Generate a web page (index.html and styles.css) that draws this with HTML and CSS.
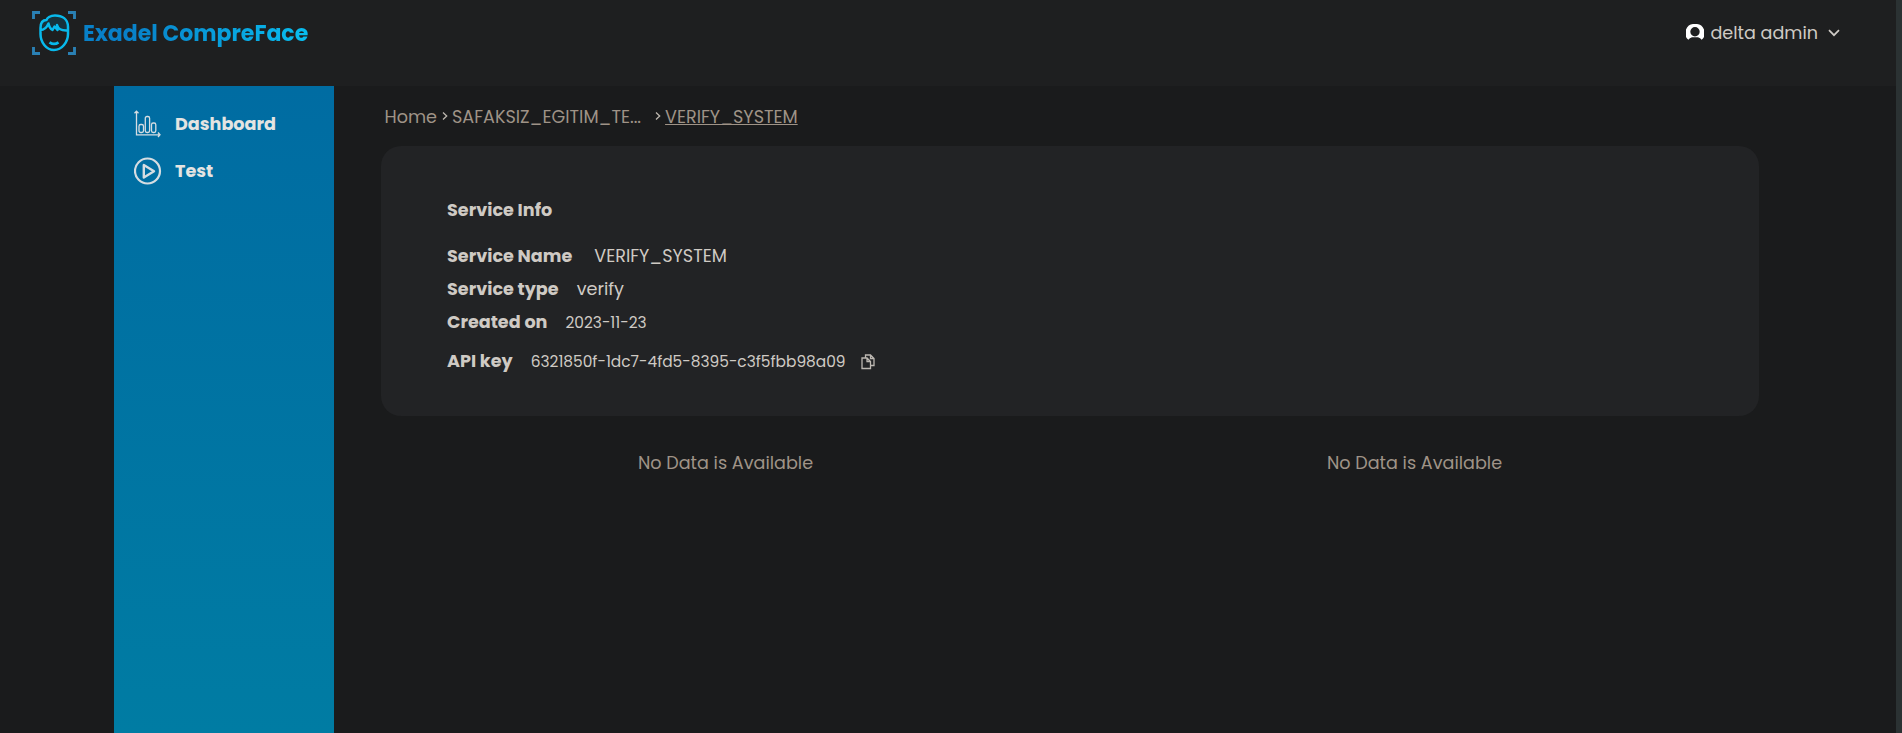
FILE: index.html
```html
<!DOCTYPE html>
<html lang="en">
<head>
<meta charset="utf-8">
<title>Exadel CompreFace</title>
<link rel="stylesheet" href="styles.css">
</head>
<body>
<header class="header">
  <a class="brand">
    <svg class="brand-mark" viewBox="0 0 44 44" fill="none">
      <path d="M1.500 8V1.500H8M36 1.500H42.500V8M42.500 36V42.500H36M8 42.500H1.500V36" stroke="#2a80b4" stroke-width="2.900"/>
      <path d="M8.500 19C8 13 10 10 14 9C20 3 34 4 36 14V19.500C30 21 26 19 25 14C24 17 22 18 20 18C18 17 17 15 16.500 12C15 17 12 19 8.500 19Z" fill="#16323c"/>
      <path d="M8.500 19V23C8.500 31 14 39 22 39S36 31 36 23V16C36 8 30 4.500 23 4.500C18 4.500 15 7 14.500 9C10.500 9 8.500 12 8.500 17V19C12 19 15 16 16.500 12.500C17 15 18.500 18 20.500 19L22.500 15.500L25.500 19L25 14C26 18 29 20 36 19.500" stroke="#08b9ec" stroke-width="2.500" stroke-linejoin="round"/>
      <path d="M17.500 31.300Q22 34.500 26.500 31.300" stroke="#08b9ec" stroke-width="2.800"/>
    </svg>
    <span class="brand-name">Exadel CompreFace</span>
  </a>
  <div class="user">
    <svg class="avatar" viewBox="0 0 18 18"><path fill="#fff" fill-rule="evenodd" d="M9 0A9 9 0 0 0 2.400 15.800Q3.500 14 6 13.300H12Q14.500 14 15.600 15.800A9 9 0 0 0 9 0ZM9 3A4.700 4.700 0 0 1 9 12.400A4.700 4.700 0 0 1 9 3Z"/></svg>
    <span class="user-name">delta admin</span>
    <svg class="chevron" viewBox="0 0 12 8" fill="none"><path d="M1 1.200L6 6.200L11 1.200" stroke="#cfcbc6" stroke-width="1.700"/></svg>
  </div>
</header>
<div class="layout">
  <nav class="sidebar">
    <a class="nav-item">
      <svg class="nav-icon" viewBox="0 0 28 28" fill="none" stroke="#d5dde2" stroke-width="1.300"><path d="M2.500 1.500V24.800H25M.500 3.200L2.500 1.200L4.500 3.200M24 22.500L26 24.800L24 27"/><rect x="5" y="14.500" width="4.500" height="8" rx="1.700"/><rect x="11.300" y="6.500" width="4.300" height="16" rx="1.700"/><rect x="17.500" y="13" width="4.300" height="9.500" rx="1.700"/></svg>
      <span>Dashboard</span>
    </a>
    <a class="nav-item">
      <svg class="nav-icon" viewBox="0 0 28 28" fill="none" stroke="#d5dde2"><circle cx="13.500" cy="14" r="12.500" stroke-width="2.200"/><path d="M9.800 8V20.500L20 14.200Z" stroke-width="2.400" stroke-linejoin="round"/></svg>
      <span>Test</span>
    </a>
  </nav>
  <main class="main">
    <div class="crumbs">
      <a>Home</a>
      <svg class="sep" viewBox="0 0 6 10" fill="none"><path d="M1 1.500L4.700 5L1 8.500" stroke="#bdb7af" stroke-width="1.300"/></svg>
      <a class="crumb-app">SAFAKSIZ_EGITIM_TE...</a>
      <svg class="sep" viewBox="0 0 6 10" fill="none"><path d="M1 1.500L4.700 5L1 8.500" stroke="#bdb7af" stroke-width="1.300"/></svg>
      <a class="crumb-current">VERIFY_SYSTEM</a>
    </div>
    <section class="card">
      <h2 class="title">Service Info</h2>
      <div class="row"><span class="label">Service Name</span><span class="value value-name">VERIFY_SYSTEM</span></div>
      <div class="row"><span class="label">Service type</span><span class="value">verify</span></div>
      <div class="row"><span class="label">Created on</span><span class="value small">2023-11-23</span></div>
      <div class="row row-key"><span class="label">API key</span><span class="value small">6321850f-1dc7-4fd5-8395-c3f5fbb98a09</span>
        <svg class="copy" viewBox="0 0 14 16" fill="none" stroke="#bdb8b2" stroke-width="1.300"><path d="M1 4H6L9.500 7.500V14.500H1ZM6 4V7.500H9.500M4.500 3.500V1H9.500L13 4.500V11.500H10M9.500 1V4.500H13"/></svg>
      </div>
    </section>
    <div class="charts"><p class="empty">No Data is Available</p><p class="empty">No Data is Available</p></div>
  </main>
</div>
<div class="scrollbar"></div>
</body>
</html>
```
FILE: styles.css
```css
* { box-sizing: border-box; }
body { margin: 0; height: 733px; overflow: hidden; background: #1a1b1c; font-family: Poppins, Inter, "Noto Sans", sans-serif; font-size: 17.6px; color: #cfcac4; position: relative; }
.header { height: 86px; background: #1e1f20; display: flex; justify-content: space-between; align-items: flex-start; padding: 11px 62px 0 32px; }
.brand { display: flex; align-items: center; gap: 7px; height: 44px; }
.brand-mark { width: 44px; height: 44px; }
.brand-name { font-size: 22px; line-height: 30px; padding-top: 1px; font-weight: 700; background: linear-gradient(90deg, #0880c8 20%, #08bdef); -webkit-background-clip: text; background-clip: text; color: transparent; white-space: nowrap; }
.user { display: flex; align-items: center; height: 44px; }
.avatar { width: 18px; height: 18px; margin-right: 6px; }
.user-name { white-space: nowrap; }
.chevron { width: 12px; height: 8px; margin-left: 10px; }
.layout { display: flex; height: 647px; padding-left: 114px; }
.sidebar { width: 220px; background: linear-gradient(#006ca2, #007ca3); padding: 14px 20px; }
.nav-item { display: flex; align-items: center; height: 47px; gap: 13px; font-weight: 700; color: #e4e4e2; }
.nav-icon { width: 28px; height: 28px; flex: none; }
.main { width: 1425px; padding-left: 47px; }
.crumbs { display: flex; align-items: center; height: 60px; padding: 1px 0 0 3.500px; color: #9f9387; white-space: nowrap; }
.sep { width: 6px; height: 10px; margin: 0 4px 2px 5px; }
.crumb-app { margin-right: 9px; }
.crumb-current { text-decoration: underline; text-decoration-thickness: 1px; }
.card { height: 270px; background: #222325; border-radius: 20px; padding: 48px 66px; }
.title { font-size: 17.6px; line-height: 33px; margin: 0 0 12px; font-weight: 700; }
.row { display: flex; align-items: center; height: 33px; white-space: nowrap; }
.row-key { margin-top: 6px; }
.label { font-weight: 700; }
.value { margin-left: 18px; }
.value-name { margin-left: 22px; }
.small { font-size: 15.4px; padding-top: 1px; }
.copy { width: 14px; height: 16px; margin: 2px 0 0 15px; }
.charts { display: grid; grid-template-columns: 1fr 1fr; padding-top: 31px; }
.empty { margin: 0; line-height: 32px; text-align: center; color: #9f9387; }
.scrollbar { position: absolute; right: 0; top: 0; width: 6px; height: 733px; background: #2b3233; }
```
